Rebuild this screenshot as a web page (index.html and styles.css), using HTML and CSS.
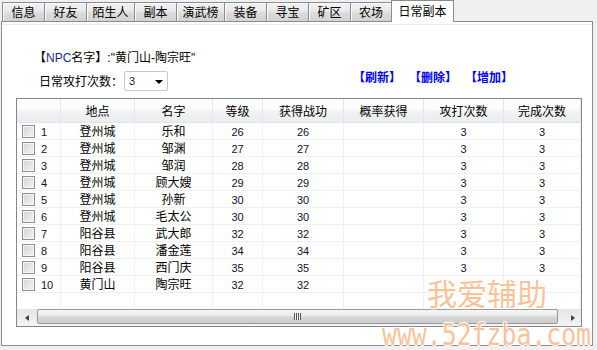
FILE: index.html
```html
<!DOCTYPE html>
<html>
<head>
<meta charset="UTF-8">
<title>日常副本</title>
<link rel="stylesheet" href="styles.css">
</head>
<body>
  <div class="tabs">
    <div class="tab w43">信息</div>
    <div class="tab w43">好友</div>
    <div class="tab w49">陌生人</div>
    <div class="tab w43">副本</div>
    <div class="tab w49">演武榜</div>
    <div class="tab w43">装备</div>
    <div class="tab w43">寻宝</div>
    <div class="tab w43">矿区</div>
    <div class="tab w42">农场</div>
    <div class="tab active">日常副本</div>
  </div>

  <div class="panel">
    <p class="npc">【<span class="npc-tag">NPC</span>名字】:"黄门山-陶宗旺"</p>

    <div class="toolbar">
      <span class="label">日常攻打次数：</span>
      <div class="select">
        <span class="select-value">3</span>
        <span class="caret"></span>
      </div>
      <div class="links">
        <a href="#">【刷新】</a>
        <a href="#">【删除】</a>
        <a href="#">【增加】</a>
      </div>
    </div>

    <div class="list">
      <div class="list-body">
        <div class="row head">
          <div class="cell"></div>
          <div class="cell">地点</div>
          <div class="cell">名字</div>
          <div class="cell">等级</div>
          <div class="cell">获得战功</div>
          <div class="cell">概率获得</div>
          <div class="cell">攻打次数</div>
          <div class="cell">完成次数</div>
        </div>

        <div class="row">
          <div class="cell first"><span class="check"></span><span class="idx">1</span></div>
          <div class="cell">登州城</div><div class="cell">乐和</div>
          <div class="cell n">26</div><div class="cell n">26</div><div class="cell"></div>
          <div class="cell n">3</div><div class="cell n">3</div>
        </div>
        <div class="row">
          <div class="cell first"><span class="check"></span><span class="idx">2</span></div>
          <div class="cell">登州城</div><div class="cell">邹渊</div>
          <div class="cell n">27</div><div class="cell n">27</div><div class="cell"></div>
          <div class="cell n">3</div><div class="cell n">3</div>
        </div>
        <div class="row">
          <div class="cell first"><span class="check"></span><span class="idx">3</span></div>
          <div class="cell">登州城</div><div class="cell">邹润</div>
          <div class="cell n">28</div><div class="cell n">28</div><div class="cell"></div>
          <div class="cell n">3</div><div class="cell n">3</div>
        </div>
        <div class="row">
          <div class="cell first"><span class="check"></span><span class="idx">4</span></div>
          <div class="cell">登州城</div><div class="cell">顾大嫂</div>
          <div class="cell n">29</div><div class="cell n">29</div><div class="cell"></div>
          <div class="cell n">3</div><div class="cell n">3</div>
        </div>
        <div class="row">
          <div class="cell first"><span class="check"></span><span class="idx">5</span></div>
          <div class="cell">登州城</div><div class="cell">孙新</div>
          <div class="cell n">30</div><div class="cell n">30</div><div class="cell"></div>
          <div class="cell n">3</div><div class="cell n">3</div>
        </div>
        <div class="row">
          <div class="cell first"><span class="check"></span><span class="idx">6</span></div>
          <div class="cell">登州城</div><div class="cell">毛太公</div>
          <div class="cell n">30</div><div class="cell n">30</div><div class="cell"></div>
          <div class="cell n">3</div><div class="cell n">3</div>
        </div>
        <div class="row">
          <div class="cell first"><span class="check"></span><span class="idx">7</span></div>
          <div class="cell">阳谷县</div><div class="cell">武大郎</div>
          <div class="cell n">32</div><div class="cell n">32</div><div class="cell"></div>
          <div class="cell n">3</div><div class="cell n">3</div>
        </div>
        <div class="row">
          <div class="cell first"><span class="check"></span><span class="idx">8</span></div>
          <div class="cell">阳谷县</div><div class="cell">潘金莲</div>
          <div class="cell n">34</div><div class="cell n">34</div><div class="cell"></div>
          <div class="cell n">3</div><div class="cell n">3</div>
        </div>
        <div class="row">
          <div class="cell first"><span class="check"></span><span class="idx">9</span></div>
          <div class="cell">阳谷县</div><div class="cell">西门庆</div>
          <div class="cell n">35</div><div class="cell n">35</div><div class="cell"></div>
          <div class="cell n">3</div><div class="cell n">3</div>
        </div>
        <div class="row">
          <div class="cell first"><span class="check"></span><span class="idx">10</span></div>
          <div class="cell">黄门山</div><div class="cell">陶宗旺</div>
          <div class="cell n">32</div><div class="cell n">32</div><div class="cell"></div>
          <div class="cell"></div><div class="cell"></div>
        </div>
        <div class="row">
          <div class="cell"></div><div class="cell"></div><div class="cell"></div><div class="cell"></div>
          <div class="cell"></div><div class="cell"></div><div class="cell"></div><div class="cell"></div>
        </div>
      </div>

      <div class="hscroll">
        <div class="sb-btn"><span class="arrow-left"></span></div>
        <div class="sb-thumb"><span class="grip"></span></div>
        <div class="sb-track"></div>
        <div class="sb-btn right"><span class="arrow-right"></span></div>
      </div>
    </div>
  </div>

  <div class="wm-title">我爱辅助</div>
  <div class="wm-url">www.52fzba.com</div>
</body>
</html>
```

FILE: styles.css
```css
/* General */
body {
    margin: 0;
    width: 597px;
    height: 350px;
    overflow: hidden;
    position: relative;
    background: #f0f0f0;
    font-family: "Liberation Sans", "Noto Sans CJK SC", sans-serif;
    font-size: 12px;
    color: #000;
}

/* Tab strip */
.tabs {
    display: flex;
    align-items: flex-end;
    height: 21px;
    padding-left: 2px;
}

.tab {
    box-sizing: border-box;
    height: 19px;
    margin-right: -1px;
    padding-top: 2px;
    display: flex;
    align-items: center;
    justify-content: center;
    border: 1px solid #898c95;
    border-bottom: none;
    background: linear-gradient(#f2f2f2, #e9e9e9 45%, #dcdcdc 55%, #d2d2d2);
    box-shadow: inset 1px 1px 0 #fcfcfc;
    line-height: 14px;
}

.w42 { width: 42px; }
.w43 { width: 43px; }
.w49 { width: 49px; }

.tab.active {
    position: relative;
    z-index: 1;
    width: 63px;
    height: 22px;
    margin-bottom: -1px;
    padding-top: 1px;
    background: #fff;
    box-shadow: none;
}

/* Main panel */
.panel {
    box-sizing: border-box;
    width: 592px;
    height: 325px;
    margin-left: 1px;
    padding: 29px 0 0 37px;
    border: 1px solid #898c95;
    background: #fff;
    box-shadow: inset 0 2px 0 #fff, inset 0 3px 0 #ececec;
}

.npc {
    margin: 0 0 0 -5px;
    height: 14px;
    line-height: 14px;
}

.npc-tag {
    color: #1b2a8a;
}

.toolbar {
    display: flex;
    align-items: center;
    height: 20px;
    margin-top: 6px;
}

.label {
    line-height: 14px;
    padding-top: 1px;
}

.select {
    box-sizing: border-box;
    display: flex;
    align-items: center;
    width: 44px;
    height: 20px;
    margin-left: 1px;
    padding-left: 4px;
    border: 1px solid #c9c9c9;
    border-radius: 2px;
    background: #fff;
}

.select-value {
    font-size: 11px;
    color: #1a1a40;
}

.caret {
    margin-left: auto;
    margin-right: 4px;
    margin-top: 1px;
    border-left: 4px solid transparent;
    border-right: 4px solid transparent;
    border-top: 4px solid #000;
}

.links {
    align-self: flex-start;
    display: flex;
    gap: 8px;
    margin-left: 185px;
    line-height: 14px;
}

.links a {
    color: #0000ff;
    font-weight: bold;
    text-decoration: none;
}

/* List view */
.list {
    box-sizing: border-box;
    width: 566px;
    height: 229px;
    margin: 7px 0 0 -23px;
    border: 1px solid #828790;
    display: flex;
    flex-direction: column;
}

.list-body {
    height: 210px;
    overflow: hidden;
}

.row {
    display: grid;
    grid-template-columns: 44px 74px 78px 50px 81px 80px 80px 77px;
    height: 17px;
}

.cell {
    box-sizing: border-box;
    display: flex;
    align-items: center;
    justify-content: center;
    border-right: 1px solid #f0f0f0;
    border-bottom: 1px solid #f0f0f0;
    line-height: 14px;
    padding-top: 1px;
    white-space: nowrap;
}

.cell.n {
    font-size: 11px;
    color: #101030;
}

.row.head {
    height: 24px;
}

.head .cell {
    padding-top: 3px;
    border-right-color: #e4e6ea;
    border-bottom-color: #e2e3e5;
    background: linear-gradient(#ffffff, #fbfbfb 45%, #f1f2f3 55%, #ebeced);
}

.cell.first {
    justify-content: flex-start;
    padding-left: 5px;
}

.check {
    box-sizing: border-box;
    width: 13px;
    height: 13px;
    border: 1px solid #8e8f8f;
    background: linear-gradient(135deg, #d4d4d4, #f4f4f4);
    box-shadow: inset 0 0 0 1px #f6f6f6;
}

.idx {
    margin-left: 6px;
    font-size: 11px;
    color: #101030;
}

/* Horizontal scrollbar */
.hscroll {
    display: flex;
    height: 17px;
    background: linear-gradient(#e6e6e6, #f3f3f3);
}

.sb-btn {
    width: 20px;
    display: flex;
    align-items: center;
    justify-content: center;
}

.sb-btn.right {
    width: 17px;
}

.arrow-left {
    border-top: 3px solid transparent;
    border-bottom: 3px solid transparent;
    border-right: 4px solid #404040;
}

.arrow-right {
    border-top: 3px solid transparent;
    border-bottom: 3px solid transparent;
    border-left: 4px solid #404040;
}

.sb-thumb {
    box-sizing: border-box;
    width: 521px;
    height: 15px;
    margin-top: 0;
    display: flex;
    align-items: center;
    justify-content: center;
    border: 1px solid #999;
    border-radius: 2px;
    background: linear-gradient(#f6f6f6, #e8e8e8 45%, #d6d6d6 55%, #cdcdcd);
}

.grip {
    width: 7px;
    height: 7px;
    background: repeating-linear-gradient(90deg, #555 0 1px, #f4f4f4 1px 2px);
}

.sb-track {
    flex: 1;
}

/* Watermark over the window */
.wm-title {
    position: absolute;
    left: 427px;
    top: 277px;
    font-family: "Noto Sans CJK SC", sans-serif;
    font-size: 30px;
    line-height: 30px;
    color: #f9c39a;
    text-shadow: 1px 0 0 #fff, -1px 0 0 #fff, 0 1px 0 #fff, 0 -1px 0 #fff, 0 0 3px #fff;
}

.wm-url {
    position: absolute;
    left: 382px;
    top: 319px;
    font-family: "DejaVu Sans Mono", monospace;
    font-size: 31px;
    line-height: 31px;
    color: #f9c39a;
    transform: scaleX(0.8);
    transform-origin: left top;
    text-shadow: 1px 0 0 #fff, -1px 0 0 #fff, 0 1px 0 #fff, 0 -1px 0 #fff, 0 0 3px #fff;
    white-space: nowrap;
}
```
